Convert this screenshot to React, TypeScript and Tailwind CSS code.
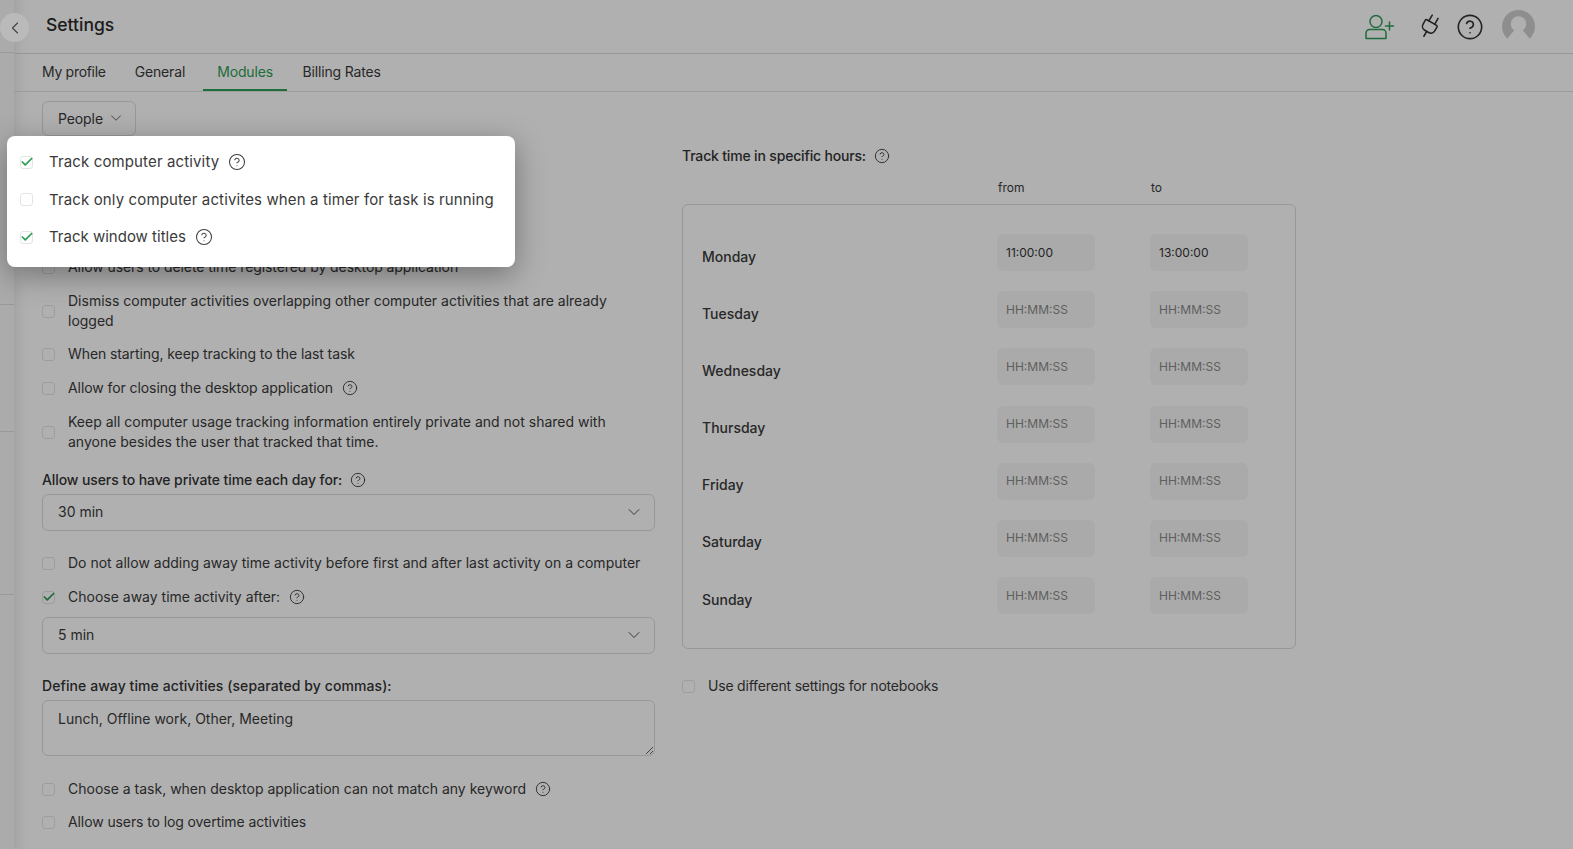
import { ChevronDown, ChevronLeft, Check, CircleHelp, Plug } from "lucide-react";

const font = "font-['Inter','Liberation_Sans',sans-serif]";

function Help({ size = 16 }: { size?: number }) {
  return <CircleHelp size={size} strokeWidth={1.4} className="shrink-0 text-[#3f3f3f]" />;
}

function Box({ checked = false }: { checked?: boolean }) {
  return (
    <span className="flex h-[13px] w-[13px] shrink-0 items-center justify-center rounded-[3px] border border-[#e4e4e4] bg-white">
      {checked && <Check size={14} strokeWidth={3} className="shrink-0 text-[#2e9e57]" />}
    </span>
  );
}

function Row({ checked, help, wide, children, className = "" }: { checked?: boolean; help?: boolean; wide?: boolean; children: React.ReactNode; className?: string }) {
  return (
    <div className={"flex items-center " + className}>
      <Box checked={checked} />
      <span className={"leading-[20px] " + (wide ? "ml-[16px]" : "ml-[13px]")}>{children}</span>
      {help && <span className="ml-[9px]"><Help size={wide ? 18 : 16} /></span>}
    </div>
  );
}

function Select({ value }: { value: string }) {
  return (
    <div className="flex h-[37px] items-center justify-between rounded-[6px] border border-[#dcdcdc] pb-[2px] pl-[15px] pr-[10px]">
      <span>{value}</span>
      <ChevronDown size={20} strokeWidth={1.2} className="text-[#555]" />
    </div>
  );
}

const days = [
  { name: "Monday", from: "11:00:00", to: "13:00:00" },
  { name: "Tuesday" },
  { name: "Wednesday" },
  { name: "Thursday" },
  { name: "Friday" },
  { name: "Saturday" },
  { name: "Sunday" },
];

function TimeInput({ value }: { value?: string }) {
  return (
    <div className={"flex h-[37px] w-[98px] items-center rounded-[6px] bg-[#f7f7f7] pl-[9px] text-[12px] " + (value ? "text-[#333]" : "text-[#8a8a8a]")}>
      {value || "HH:MM:SS"}
    </div>
  );
}

export default function App() {
  return (
    <div className={"relative flex h-[849px] w-full overflow-hidden bg-white text-[14px] text-[#3a3a3a] " + font}>
      {/* sidebar edge */}
      <div className="flex w-[14px] shrink-0 flex-col bg-[#f8f8f8]">
        <div className="h-[53px] border-b border-[#dedede]" />
        <div className="h-[252px] border-b border-[#dedede]" />
        <div className="h-[127px] border-b border-[#dedede]" />
        <div className="h-[163px] border-b border-[#dedede]" />
      </div>

      <div className="flex min-w-0 flex-1 flex-col bg-white shadow-[inset_12px_0_12px_-8px_rgba(0,0,0,0.09)]">
        <header className="flex h-[54px] shrink-0 items-center justify-between border-b border-[#d9d9d9] pl-[32px] pr-[38px]">
          <h1 className="pb-[2px] text-[17.5px] font-medium text-[#2b2b2b]">Settings</h1>
          <div className="flex items-center">
            <svg viewBox="0 0 30 26" fill="none" stroke="#2e9e57" strokeWidth="1.5" strokeLinecap="round" className="h-[26px] w-[30px]">
              <circle cx="11" cy="7.5" r="6" />
              <path d="M4.5 15.5 H17.5 A3.5 3.5 0 0 1 21 19 V24.5 H1 V19 A3.5 3.5 0 0 1 4.5 15.5 Z" strokeLinejoin="round" />
              <path d="M24.5 8 V16 M20.5 12 H28.5" />
            </svg>
            <Plug size={27} strokeWidth={1.4} className="ml-[21px] rotate-[30deg] text-[#333]" />
            <CircleHelp size={28} strokeWidth={1.4} className="ml-[13px] text-[#333]" />
            <svg viewBox="0 0 32 32" className="ml-[18px] h-[33px] w-[33px]">
              <circle cx="16" cy="16" r="16" fill="#cecece" />
              <circle cx="16" cy="13.5" r="7.5" fill="#fff" />
              <path d="M12.5 19 H19.5 L28 29 L16 34 L4 29 Z" fill="#fff" />
            </svg>
          </div>
        </header>

        <nav className="flex h-[38px] shrink-0 border-b border-[#e2e2e2] pl-[13.5px] tracking-[-0.15px]">
          {["My profile", "General", "Modules", "Billing Rates"].map((t) => (
            <div
              key={t}
              className={
                "flex items-center px-[14.5px] " +
                (t === "Modules" ? "ml-[3px] mr-[0.5px] border-b-[2px] border-[#2e9e57] text-[#2e9e57]" : "pb-[2px]") +
                (t === "My profile" ? " tracking-[-0.3px]" : "")
              }
            >
              {t}
            </div>
          ))}
        </nav>

        <main className="flex gap-[27px] pl-[28px] pt-[9px]">
          <section className="w-[613px] shrink-0">
            <div className="flex h-[35px] w-[94px] items-center rounded-[6px] border border-[#dcdcdc] pb-[1px] pl-[15px] tracking-[-0.1px]">
              People <ChevronDown size={18} strokeWidth={1.2} className="ml-[4px] text-[#555]" />
            </div>

            <Row className="mt-[121px] tracking-[-0.08px]">Allow users to delete time registered by desktop application</Row>
            <Row className="mt-[14px]">Dismiss computer activities overlapping other computer activities that are already logged</Row>
            <Row className="mt-[13px] tracking-[-0.09px]">When starting, keep tracking to the last task</Row>
            <Row className="mt-[14px] tracking-[-0.08px]" help>Allow for closing the desktop application</Row>
            <Row className="mt-[14px]">Keep all computer usage tracking information entirely private and not shared with anyone besides the user that tracked that time.</Row>

            <div className="mt-[17px] flex items-center gap-[8px] font-medium tracking-[-0.1px] text-[#333]">
              Allow users to have private time each day for: <Help />
            </div>
            <div className="mt-[4px]"><Select value="30 min" /></div>

            <Row className="mt-[22px]">Do not allow adding away time activity before first and after last activity on a computer</Row>
            <Row className="mt-[14px]" checked help>Choose away time activity after:</Row>
            <div className="mt-[10px]"><Select value="5 min" /></div>

            <div className="mt-[21px] font-medium tracking-[0.08px] text-[#333]">Define away time activities (separated by commas):</div>
            <textarea
              readOnly
              defaultValue="Lunch, Offline work, Other, Meeting"
              className="mt-[4px] block h-[56px] w-full rounded-[6px] border border-[#dcdcdc] pl-[15px] pt-[7px] outline-none"
            />

            <Row className="mt-[23px]" help>Choose a task, when desktop application can not match any keyword</Row>
            <Row className="mt-[13px] tracking-[-0.1px]">Allow users to log overtime activities</Row>
          </section>

          <section className="w-[614px] shrink-0 pt-[44px]">
            <div className="flex items-center gap-[8px] font-medium tracking-[-0.17px] text-[#333]">
              Track time in specific hours: <Help />
            </div>
            <div className="mt-[13px] flex text-[12px]">
              <span className="ml-[316px] w-[153px]">from</span>
              <span>to</span>
            </div>
            <div className="mt-[7px] flex h-[445px] flex-col gap-[20.2px] rounded-[6px] border border-[#dcdcdc] pl-[19px] pt-[29px]">
              {days.map((d) => (
                <div key={d.name} className="flex items-center">
                  <span className="w-[295px] pt-[7px] font-medium">{d.name}</span>
                  <TimeInput value={d.from} />
                  <span className="ml-[55px]"><TimeInput value={d.to} /></span>
                </div>
              ))}
            </div>
            <Row className="mt-[27px] tracking-[-0.2px]">Use different settings for notebooks</Row>
          </section>
        </main>
      </div>

      {/* modal overlay */}
      <div className="absolute inset-0 bg-black/[0.31]" />
      <div className="absolute left-[0px] top-[13px] flex h-[29px] w-[29px] items-center justify-center rounded-full bg-[#bababa]">
        <ChevronLeft size={20} strokeWidth={1.4} className="text-[#444]" />
      </div>

      <div className="absolute left-[7px] top-[136px] flex h-[131px] w-[508px] flex-col gap-[17.5px] rounded-[8px] bg-white pl-[13px] pt-[16px] text-[15px] tracking-[0.13px] shadow-[0_8px_30px_rgba(0,0,0,0.35)]">
        <Row checked help wide>Track computer activity</Row>
        <Row wide>Track only computer activites when a timer for task is running</Row>
        <Row checked help wide className="tracking-normal">Track window titles</Row>
      </div>
    </div>
  );
}
